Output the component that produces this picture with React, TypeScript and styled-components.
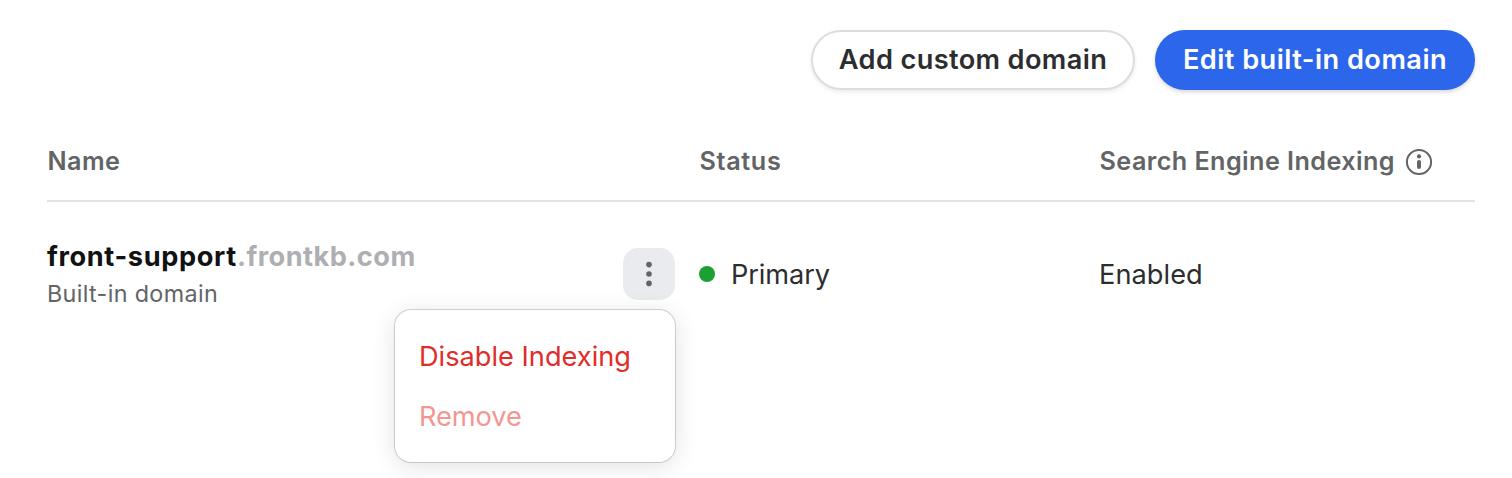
import React from "react";
import styled, { createGlobalStyle } from "styled-components";

const GlobalStyle = createGlobalStyle`
  * { box-sizing: border-box; }
  body {
    margin: 0;
    height: 478px;
    overflow: hidden;
    background: #fff;
    color: #2c2d2f;
    font-family: Inter, "Liberation Sans", sans-serif;
    font-size: 27.2px;
    -webkit-font-smoothing: antialiased;
  }
  button { font: inherit; color: inherit; margin: 0; border: 0; background: none; }
`;

const Page = styled.main`
  height: 478px;
  padding: 30px 37px 0 47px;
  overflow: hidden;
`;

const Toolbar = styled.div`
  display: flex;
  justify-content: flex-end;
  gap: 20px;
`;

const PillButton = styled.button<{ $primary?: boolean; $width: number; $tracking: number }>`
  && {
    display: flex;
    align-items: center;
    justify-content: center;
    width: ${(p) => p.$width}px;
    height: 60px;
    padding: 0 0 2px;
    border: ${(p) => (p.$primary ? "0" : "2px solid #dcdddf")};
    border-radius: 30px;
    background: ${(p) => (p.$primary ? "#2b66eb" : "#fff")};
    color: ${(p) => (p.$primary ? "#fff" : "#2c2d2f")};
    box-shadow: 0 2px 4px rgba(0, 0, 0, ${(p) => (p.$primary ? 0.16 : 0.08)});
    font-weight: 600;
    letter-spacing: ${(p) => p.$tracking}px;
    white-space: nowrap;
  }
`;

const Row = styled.div`
  display: grid;
  grid-template-columns: 652px 400px 1fr;
`;

const HeaderRow = styled(Row)`
  height: 112px;
  padding-top: 55px;
  border-bottom: 2px solid #e4e4e8;
  color: #626466;
  font-size: 25.2px;
  line-height: 32px;
  font-weight: 600;
`;

const HeaderCell = styled.div<{ $tracking: number }>`
  display: flex;
  padding-left: 0.5px;
  letter-spacing: ${(p) => p.$tracking}px;
  white-space: nowrap;
`;

const InfoIcon = styled.svg`
  width: 28px;
  height: 28px;
  margin: 3px 0 0 9.5px;
`;

const BodyRow = styled(Row)`
  padding-top: 36px;
`;

const NameCell = styled.div`
  display: flex;
  justify-content: space-between;
  padding-right: 24px;
`;

const Domain = styled.div`
  padding-top: 1px;
  color: #111213;
  font-weight: 700;
  line-height: 36px;
  letter-spacing: 0.63px;
`;

const DomainSuffix = styled.span`
  color: #aeafb3;
  letter-spacing: 0.45px;
`;

const Caption = styled.div`
  margin-top: 3px;
  color: #626466;
  font-size: 23.3px;
  line-height: 32px;
  letter-spacing: 0.36px;
`;

const MenuAnchor = styled.div`
  position: relative;
  margin-top: 10px;
  height: 52px;
`;

const MoreButton = styled.button`
  && {
    display: flex;
    width: 52px;
    height: 52px;
    padding: 0;
    border-radius: 15px;
    background: #eaebef;
  }
`;

const Menu = styled.div`
  position: absolute;
  top: 62px;
  right: 0;
  width: 280px;
  height: 152px;
  padding: 16px 0;
  border-radius: 16px;
  background: #fff;
  box-shadow: 0 0 0 1px rgba(0, 0, 0, 0.16), 0 4px 24px rgba(0, 0, 0, 0.12);
`;

const MenuItem = styled.button<{ $disabled?: boolean; $tracking: number }>`
  && {
    display: flex;
    align-items: center;
    width: 100%;
    height: 60px;
    padding: 0 0 0 24px;
    color: ${(p) => (p.$disabled ? "#f39691" : "#e12d2a")};
    letter-spacing: ${(p) => p.$tracking}px;
    white-space: nowrap;
  }
`;

const ValueCell = styled.div<{ $tracking: number }>`
  display: flex;
  align-items: center;
  height: 72px;
  letter-spacing: ${(p) => p.$tracking}px;
`;

const StatusDot = styled.span`
  width: 16px;
  height: 16px;
  margin-right: 16px;
  border-radius: 50%;
  background: #1ca033;
`;

export default function App() {
  return (
    <>
      <GlobalStyle />
      <Page>
        <Toolbar>
          <PillButton $width={324} $tracking={0.36}>Add custom domain</PillButton>
          <PillButton $primary $width={320} $tracking={0.46}>Edit built-in domain</PillButton>
        </Toolbar>
        <HeaderRow>
          <HeaderCell $tracking={0.4}>Name</HeaderCell>
          <HeaderCell $tracking={0.65}>Status</HeaderCell>
          <HeaderCell $tracking={0.43}>
            Search Engine Indexing
            <InfoIcon viewBox="0 0 28 28" fill="none">
              <circle cx="14" cy="14" r="12.1" stroke="#626466" strokeWidth="2" />
              <circle cx="14" cy="8.4" r="2.1" fill="#626466" />
              <path d="M14 14v5" stroke="#626466" strokeWidth="4" strokeLinecap="round" />
            </InfoIcon>
          </HeaderCell>
        </HeaderRow>
        <BodyRow>
          <NameCell>
            <div>
              <Domain>front-support<DomainSuffix>.frontkb.com</DomainSuffix></Domain>
              <Caption>Built-in domain</Caption>
            </div>
            <MenuAnchor>
              <MoreButton aria-label="More actions">
                <svg width="52" height="52" viewBox="0 0 52 52" fill="#626466">
                  <circle cx="26" cy="16.6" r="2.8" />
                  <circle cx="26" cy="26" r="2.8" />
                  <circle cx="26" cy="35.4" r="2.8" />
                </svg>
              </MoreButton>
              <Menu>
                <MenuItem $tracking={0}>Disable Indexing</MenuItem>
                <MenuItem $disabled $tracking={-0.05}>Remove</MenuItem>
              </Menu>
            </MenuAnchor>
          </NameCell>
          <ValueCell $tracking={-0.1}><StatusDot />Primary</ValueCell>
          <ValueCell $tracking={0.05}>Enabled</ValueCell>
        </BodyRow>
      </Page>
    </>
  );
}
